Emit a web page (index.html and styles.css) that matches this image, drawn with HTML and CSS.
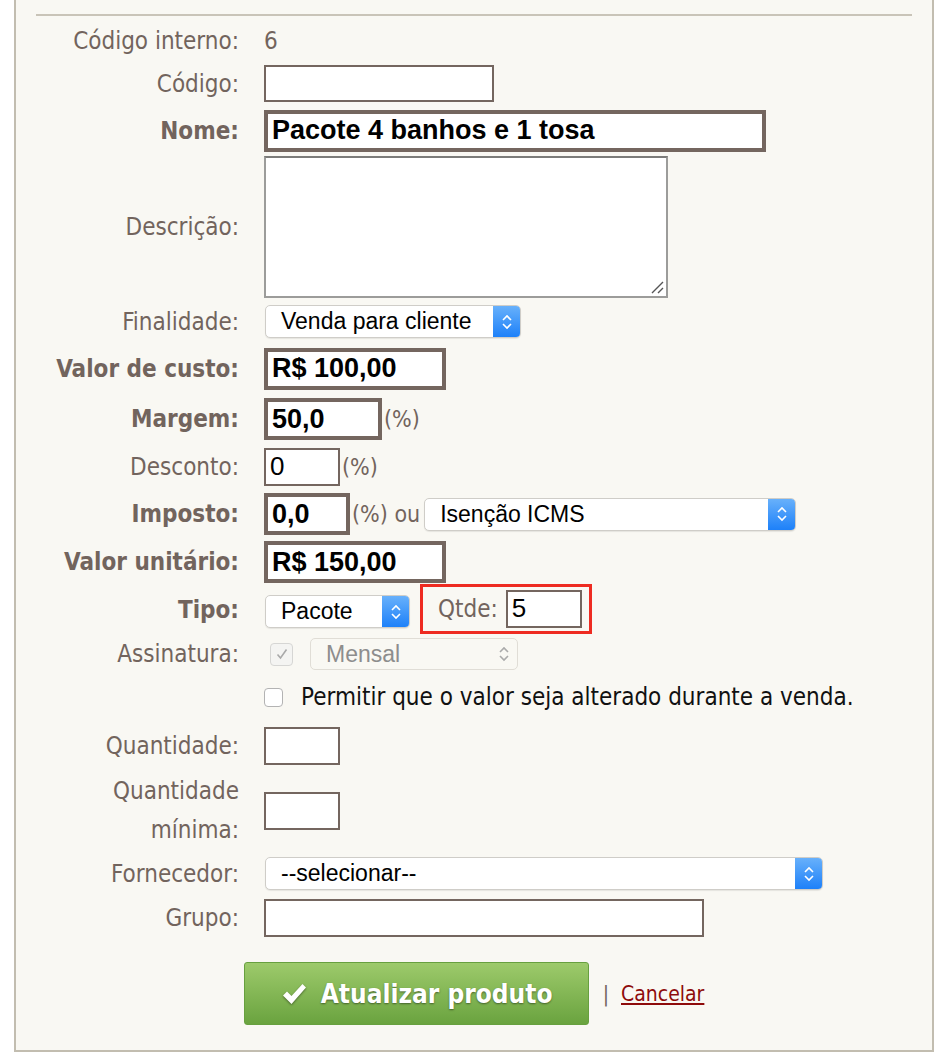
FILE: index.html
```html
<!DOCTYPE html>
<html>
<head>
    <title>Editar produto</title>
    <link rel="stylesheet" href="styles.css">
</head>
<body>
    <div class="panel">
        <hr class="rule">
        <form class="product-form">
            <label class="label">Código interno:</label>
            <div class="field"><span class="value">6</span></div>

            <label class="label">Código:</label>
            <div class="field"><span class="input w-code"></span></div>

            <label class="label strong">Nome:</label>
            <div class="field"><span class="input thick w-name">Pacote 4 banhos e 1 tosa</span></div>

            <label class="label">Descrição:</label>
            <div class="field">
                <span class="textarea">
                    <svg class="grip" width="14" height="14" viewBox="0 0 14 14">
                        <path d="M2 13 L13 2 M8 13 L13 8" stroke="#555" stroke-width="1.4" fill="none"/>
                    </svg>
                </span>
            </div>

            <label class="label">Finalidade:</label>
            <div class="field"><span class="select w-finalidade">Venda para cliente<span class="arrows"><svg width="12" height="18" viewBox="0 0 12 18"><path d="M2 7 L6 3 L10 7 M2 11 L6 15 L10 11" stroke="#fff" stroke-width="1.6" fill="none"/></svg></span></span></div>

            <label class="label strong">Valor de custo:</label>
            <div class="field"><span class="input thick w-money">R$ 100,00</span></div>

            <label class="label strong">Margem:</label>
            <div class="field"><span class="input thick w-margin">50,0</span><span class="unit">(%)</span></div>

            <label class="label">Desconto:</label>
            <div class="field"><span class="input w-small">0</span><span class="unit">(%)</span></div>

            <label class="label strong">Imposto:</label>
            <div class="field"><span class="input thick w-tax">0,0</span><span class="unit">(%) ou</span><span class="select w-icms">Isenção ICMS<span class="arrows"><svg width="12" height="18" viewBox="0 0 12 18"><path d="M2 7 L6 3 L10 7 M2 11 L6 15 L10 11" stroke="#fff" stroke-width="1.6" fill="none"/></svg></span></span></div>

            <label class="label strong">Valor unitário:</label>
            <div class="field"><span class="input thick w-money">R$ 150,00</span></div>

            <label class="label strong">Tipo:</label>
            <div class="field">
                <span class="select w-tipo">Pacote<span class="arrows"><svg width="12" height="18" viewBox="0 0 12 18"><path d="M2 7 L6 3 L10 7 M2 11 L6 15 L10 11" stroke="#fff" stroke-width="1.6" fill="none"/></svg></span></span>
                <span class="highlight"><span class="qtde">Qtde:</span><span class="input w-qtde">5</span></span>
            </div>

            <label class="label">Assinatura:</label>
            <div class="field">
                <span class="checkbox checked"><svg width="14" height="14" viewBox="0 0 14 14"><path d="M2.5 7.5 L5.5 11 L11.5 2.5" stroke="#a9a9a9" stroke-width="1.6" fill="none"/></svg></span>
                <span class="select disabled w-mensal">Mensal<span class="arrows"><svg width="12" height="18" viewBox="0 0 12 18"><path d="M2 7 L6 3 L10 7 M2 11 L6 15 L10 11" stroke="#aaa" stroke-width="1.6" fill="none"/></svg></span></span>
            </div>

            <span class="label"></span>
            <div class="field"><span class="checkbox"></span><span class="check-text">Permitir que o valor seja alterado durante a venda.</span></div>

            <label class="label">Quantidade:</label>
            <div class="field"><span class="input w-small"></span></div>

            <label class="label two-line">Quantidade mínima:</label>
            <div class="field"><span class="input w-small"></span></div>

            <label class="label">Fornecedor:</label>
            <div class="field"><span class="select w-fornecedor">--selecionar--<span class="arrows"><svg width="12" height="18" viewBox="0 0 12 18"><path d="M2 7 L6 3 L10 7 M2 11 L6 15 L10 11" stroke="#fff" stroke-width="1.6" fill="none"/></svg></span></span></div>

            <label class="label">Grupo:</label>
            <div class="field"><span class="input w-group"></span></div>
        </form>
        <div class="actions">
            <button class="btn-save" type="button">
                <svg class="tick" width="25" height="22" viewBox="0 0 25 22">
                    <path d="M1 12.5 L5 8.5 L9.5 13 L20.5 1 L24 4.5 L9.5 21 Z" fill="#fff"/>
                </svg>
                Atualizar produto
            </button>
            <span class="sep">|</span>
            <a class="cancel" href="#">Cancelar</a>
        </div>
    </div>
</body>
</html>
```

FILE: styles.css
```css
body {
    margin: 0;
    background: #fff;
    font-family: "DejaVu Sans Condensed", "DejaVu Sans", sans-serif;
}
.panel {
    margin-left: 14px;
    width: 916px;
    background-color: #f9f8f3;
    border: 2px solid #c2bdb0;
    border-top: none;
    padding-top: 14px;
}
.rule {
    margin: 0 20px 0 20px;
    border: none;
    border-top: 2px solid #c9c4b8;
    height: 0;
}
.product-form {
    display: grid;
    grid-template-columns: 223px 1fr;
    grid-template-rows: 38px 47px 47px 145px 45px 49px 52px 43px 52px 44px 51px 38px 48px 49px 81px 45px 43px;
    column-gap: 25px;
    margin-top: 6px;
}
.label {
    align-self: center;
    text-align: right;
    color: #72645d;
    font-size: 24px;
}
.label.strong {
    font-weight: bold;
    font-size: 24px;
}
.label.two-line {
    line-height: 39px;
    padding-left: 90px;
}
.field {
    display: flex;
    align-items: center;
}
.value {
    color: #72645d;
    font-size: 24px;
}
.input {
    box-sizing: border-box;
    display: flex;
    align-items: center;
    height: 38px;
    padding: 0 4px;
    background: #fff;
    border: 2px solid #74665f;
    font-family: "Liberation Sans", Arial, sans-serif;
    font-size: 26px;
    color: #000;
}
.input.thick {
    height: 42px;
    border-width: 4px;
    font-weight: bold;
    font-size: 27px;
}
.w-code { width: 230px; height: 37px; }
.w-name { width: 502px; }
.w-money { width: 182px; }
.w-margin { width: 118px; }
.w-small { width: 76px; }
.w-tax { width: 86px; }
.w-qtde { width: 76px; }
.w-group { width: 440px; }
.unit {
    color: #72645d;
    font-size: 23px;
    margin-left: 2px;
}
.unit + .select {
    margin-left: 4px;
}
.textarea {
    position: relative;
    box-sizing: border-box;
    width: 404px;
    height: 142px;
    background: #fff;
    border: 2px solid #9c9c9a;
    border-top-color: #7b7b79;
}
.grip {
    position: absolute;
    right: 2px;
    bottom: 2px;
}
.select {
    box-sizing: border-box;
    display: flex;
    align-items: center;
    height: 33px;
    padding-left: 15px;
    background: #fff;
    border: 1px solid #cfcdc8;
    border-radius: 5px;
    box-shadow: 0 1px 1px rgba(0, 0, 0, 0.08);
    font-family: "Liberation Sans", Arial, sans-serif;
    font-size: 23px;
    color: #000;
    overflow: hidden;
}
.select .arrows {
    margin-left: auto;
    display: flex;
    align-items: center;
    justify-content: center;
    width: 28px;
    height: 33px;
    margin-right: -1px;
    background: linear-gradient(to bottom, #6ab2fb, #1b7ff9);
    border-radius: 0 5px 5px 0;
}
.select.disabled {
    background: #f9f8f3;
    border-color: #e0ddd6;
    color: #8d8d8d;
    box-shadow: none;
}
.select.disabled .arrows {
    background: none;
}
.w-finalidade { width: 256px; margin-left: 1px; }
.w-icms { width: 372px; }
.w-tipo { width: 145px; margin-left: 1px; margin-top: 4px; }
.w-mensal { width: 208px; margin-left: 17px; height: 32px; }
.w-fornecedor { width: 558px; margin-left: 1px; }
.highlight {
    display: flex;
    align-items: center;
    box-sizing: border-box;
    width: 172px;
    height: 50px;
    margin-left: 10px;
    margin-top: -2px;
    padding: 0 0 0 15px;
    border: 3px solid #ee2b21;
}
.qtde {
    color: #72645d;
    font-size: 24px;
    margin-right: 8px;
}
.checkbox {
    box-sizing: border-box;
    display: flex;
    align-items: center;
    justify-content: center;
    width: 19px;
    height: 19px;
    background: #fff;
    border: 1px solid #b3b3b3;
    border-radius: 4px;
}
.checkbox.checked {
    width: 23px;
    height: 23px;
    margin-left: 6px;
    background: #f4f4f2;
    border-color: #d6d6d4;
}
.check-text {
    margin-left: 18px;
    font-size: 24px;
    color: #111;
}
.actions {
    display: flex;
    justify-content: center;
    align-items: center;
    padding: 23px 0 25px;
}
.btn-save {
    box-sizing: border-box;
    display: flex;
    align-items: center;
    justify-content: center;
    width: 345px;
    height: 63px;
    padding-right: 4px;
    background: linear-gradient(to bottom, #9dca6b, #6aa33f);
    border: 1px solid #67a03f;
    border-radius: 3px;
    color: #fff;
    font-family: "DejaVu Sans Condensed", "DejaVu Sans", sans-serif;
    font-weight: bold;
    font-size: 26px;
    text-shadow: 0 1px 2px rgba(0, 0, 0, 0.45);
    cursor: pointer;
}
.tick {
    margin-right: 14px;
    filter: drop-shadow(0 1px 1px rgba(0, 0, 0, 0.45));
}
.sep {
    margin-left: 14px;
    color: #72645d;
    font-size: 21px;
}
.cancel {
    margin-left: 12px;
    color: #8e0b0b;
    font-size: 21px;
}
```
